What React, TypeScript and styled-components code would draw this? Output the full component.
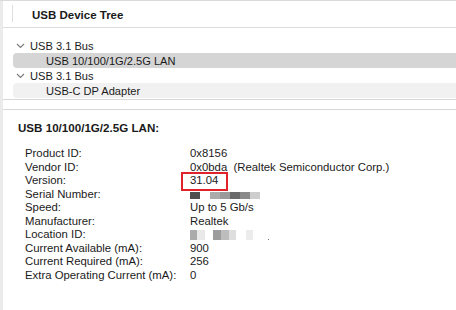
import React from 'react'
import styled, { createGlobalStyle } from 'styled-components'

const GlobalStyle = createGlobalStyle`
    html, body {
        margin: 0;
        padding: 0;
        background: #fff;
    }
    body {
        font-family: 'Liberation Sans', Arial, sans-serif;
        color: #1a1a1a;
        -webkit-font-smoothing: antialiased;
    }
`

interface IRow {
    label: string
    value?: string
    boxed?: boolean
    blur?: { w: number; c: string }[]
}

const blurSerial = [
    { w: 10, c: '#4f4f4f' },
    { w: 10, c: '#fff' },
    { w: 10, c: '#ababab' },
    { w: 10, c: '#9a9a9a' },
    { w: 10, c: '#6a6a6a' },
    { w: 10, c: '#8a8a8a' },
    { w: 10, c: '#cdcdcd' }
]

const blurLocation = [
    { w: 7, c: '#ababab' },
    { w: 8, c: '#e9e9e9' },
    { w: 8, c: '#fff' },
    { w: 8, c: '#9c9c9c' },
    { w: 8, c: '#bdbdbd' },
    { w: 7, c: '#dedede' },
    { w: 10, c: '#fff' },
    { w: 7, c: '#ececec' }
]

const rows: IRow[] = [
    { label: 'Product ID:', value: '0x8156' },
    { label: 'Vendor ID:', value: '0x0bda  (Realtek Semiconductor Corp.)' },
    { label: 'Version:', value: '31.04', boxed: true },
    { label: 'Serial Number:', blur: blurSerial },
    { label: 'Speed:', value: 'Up to 5 Gb/s' },
    { label: 'Manufacturer:', value: 'Realtek' },
    { label: 'Location ID:', blur: blurLocation },
    { label: 'Current Available (mA):', value: '900' },
    { label: 'Current Required (mA):', value: '256' },
    { label: 'Extra Operating Current (mA):', value: '0' }
]

const Chevron = () => (
    <svg width="9" height="6" viewBox="0 0 9 6">
        <path d="M1 1 L4.5 4.5 L8 1" fill="none" stroke="#7a7a7a" strokeWidth="1.1" />
    </svg>
)

export default function App() {
    return (
        <Window>
            <GlobalStyle />
            <Gutter />
            <Main>
                <TreePane>
                    <Header>
                        <HeaderSep />
                        <HeaderTitle>USB Device Tree</HeaderTitle>
                    </Header>
                    <TreeList>
                        <TreeRow>
                            <Chevron />
                            <span>USB 3.1 Bus</span>
                        </TreeRow>
                        <TreeRow $child $selected>
                            <span>USB 10/100/1G/2.5G LAN</span>
                        </TreeRow>
                        <TreeRow>
                            <Chevron />
                            <span>USB 3.1 Bus</span>
                        </TreeRow>
                        <TreeRow $child $alt>
                            <span>USB-C DP Adapter</span>
                        </TreeRow>
                    </TreeList>
                </TreePane>
                <Splitter />
                <DetailPane>
                    <DetailTitle>USB 10/100/1G/2.5G LAN:</DetailTitle>
                    <InfoGrid>
                        {rows.map(r => (
                            <React.Fragment key={r.label}>
                                <Label>{r.label}</Label>
                                <Value>
                                    {r.boxed ? <Boxed>{r.value}</Boxed> : r.value}
                                    {r.blur && (
                                        <BlurStrip $loc={r.label === 'Location ID:'}>
                                            {r.blur.map((b, i) => (
                                                <Pixel key={i} style={{ width: b.w, background: b.c }} />
                                            ))}
                                            {r.label === 'Location ID:' && <Dot />}
                                        </BlurStrip>
                                    )}
                                </Value>
                            </React.Fragment>
                        ))}
                    </InfoGrid>
                </DetailPane>
            </Main>
        </Window>
    )
}

const Window = styled.div`
    width: 456px;
    height: 310px;
    display: flex;
    border-top: 1px solid #dadada;
    box-sizing: border-box;
    overflow: hidden;
`

const Gutter = styled.div`
    width: 3px;
    flex: none;
    background: #ebebeb;
`

const Main = styled.div`
    flex: 1;
    display: flex;
    flex-direction: column;
`

const TreePane = styled.div`
    height: 98px;
    display: flex;
    flex-direction: column;
`

const Header = styled.div`
    height: 26px;
    display: flex;
    align-items: center;
    border-bottom: 1px solid #dcdcdc;
`

const HeaderSep = styled.div`
    width: 1px;
    height: 17px;
    margin-left: 9px;
    background: #dedede;
    align-self: flex-start;
    margin-top: 4px;
`

const HeaderTitle = styled.div`
    margin-left: 19px;
    margin-top: 2px;
    font-size: 11.5px;
    font-weight: bold;
`

const TreeList = styled.div`
    padding-top: 10px;
    display: flex;
    flex-direction: column;
`

const TreeRow = styled.div<{ $child?: boolean; $selected?: boolean; $alt?: boolean }>`
    height: 15px;
    display: flex;
    align-items: center;
    gap: 5px;
    margin-left: 10px;
    padding-left: ${p => (p.$child ? '33px' : '3px')};
    font-size: 11.1px;
    border-radius: 4px 0 0 4px;
    background: ${p => (p.$selected ? '#d5d5d5' : p.$alt ? '#f1f1f1' : 'transparent')};
    svg {
        margin-top: 1px;
    }
`

const Splitter = styled.div`
    height: 9px;
    border-top: 1px solid #d8d8d8;
    border-bottom: 1px solid #d8d8d8;
    background: #fff;
`

const DetailPane = styled.div`
    flex: 1;
    padding: 11px 0 0 15px;
`

const DetailTitle = styled.div`
    font-size: 11.6px;
    font-weight: bold;
    line-height: 14px;
`

const InfoGrid = styled.div`
    display: grid;
    grid-template-columns: 165px auto;
    margin: 12px 0 0 7px;
    font-size: 11.35px;
    line-height: 13.5px;
`

const Label = styled.div`
    white-space: nowrap;
`

const Value = styled.div`
    white-space: pre;
    display: flex;
    align-items: center;
`

const Boxed = styled.span`
    position: relative;
    &::after {
        content: '';
        position: absolute;
        left: -9px;
        right: -10px;
        top: -2px;
        bottom: -3px;
        border: 2px solid #e2222a;
    }
`

const BlurStrip = styled.div<{ $loc?: boolean }>`
    display: flex;
    align-items: flex-end;
    height: ${p => (p.$loc ? '10px' : '7px')};
    margin-top: ${p => (p.$loc ? '0' : '2px')};
`

const Pixel = styled.span`
    height: 100%;
`

const Dot = styled.span`
    width: 1px;
    height: 1px;
    background: #777;
    margin-left: 15px;
    align-self: flex-end;
`
